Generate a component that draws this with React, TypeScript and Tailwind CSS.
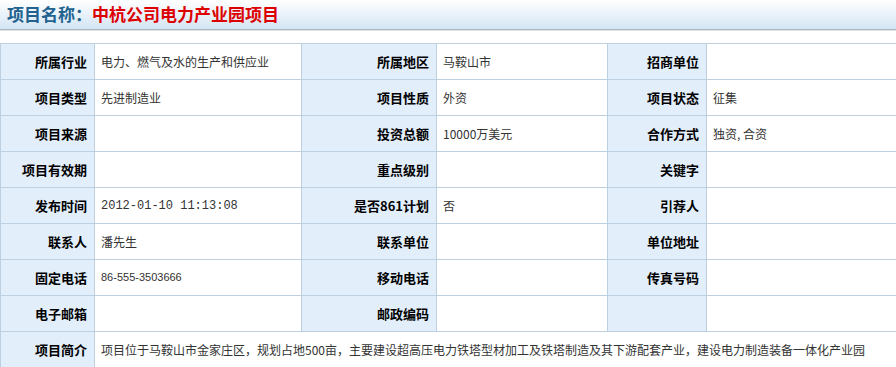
const rows: [string, string, string, string, string, string][] = [
  ["所属行业", "电力、燃气及水的生产和供应业", "所属地区", "马鞍山市", "招商单位", ""],
  ["项目类型", "先进制造业", "项目性质", "外资", "项目状态", "征集"],
  ["项目来源", "", "投资总额", "10000万美元", "合作方式", "独资, 合资"],
  ["项目有效期", "", "重点级别", "", "关键字", ""],
  ["发布时间", "2012-01-10 11:13:08", "是否861计划", "否", "引荐人", ""],
  ["联系人", "潘先生", "联系单位", "", "单位地址", ""],
  ["固定电话", "86-555-3503666", "移动电话", "", "传真号码", ""],
  ["电子邮箱", "", "邮政编码", "", "", ""],
];

const cjk = "font-['SimSun','Noto_Sans_CJK_SC',sans-serif]";

function Label({ text }: { text: string }) {
  return (
    <td className="h-9 border border-[#bdd0e2] bg-[#e2eefa] p-0 pr-[7px] text-right align-middle text-[13px] font-bold text-black">
      {text}
    </td>
  );
}

function Value({ text }: { text: string }) {
  const mono = /^\d{4}-\d{2}-\d{2}/.test(text);
  const phone = /^\d+-\d+-\d+$/.test(text);
  return (
    <td
      className={
        "h-9 border border-[#bdd0e2] bg-white p-0 pl-[6px] text-left align-middle text-[#333] " +
        (mono
          ? "font-['Liberation_Mono',monospace] text-[12px]"
          : phone
            ? "font-['Liberation_Sans',sans-serif] text-[11px]"
            : "text-[12px]")
      }
    >
      {text}
    </td>
  );
}

export default function App() {
  return (
    <div className={`h-[367px] w-[896px] overflow-hidden bg-white ${cjk}`}>
      <div className="h-[29px] bg-gradient-to-b from-white to-[#d3e5f4] pl-[7px] pt-[3px] text-[17px] font-bold leading-[21px]">
        <span className="text-[#22628f]">项目名称：</span>
        <span className="text-[#dd0000]">中杭公司电力产业园项目</span>
      </div>
      <div className="h-px bg-[#aeb9c4]" />
      <div className="h-px bg-[#dfe4ea]" />
      <div className="h-[12px]" />
      <table className="w-[900px] table-fixed border-collapse">
        <colgroup>
          <col className="w-[94px]" />
          <col className="w-[207px]" />
          <col className="w-[135px]" />
          <col className="w-[171px]" />
          <col className="w-[99px]" />
          <col />
        </colgroup>
        <tbody>
          {rows.map((r, i) => (
            <tr key={i}>
              <Label text={r[0]} />
              <Value text={r[1]} />
              <Label text={r[2]} />
              <Value text={r[3]} />
              <Label text={r[4]} />
              <Value text={r[5]} />
            </tr>
          ))}
          <tr>
            <Label text="项目简介" />
            <td colSpan={5} className="h-9 border border-[#bdd0e2] bg-white p-0 pl-[6px] text-left align-middle text-[12px] whitespace-nowrap text-[#333]">
              项目位于马鞍山市金家庄区，规划占地500亩，主要建设超高压电力铁塔型材加工及铁塔制造及其下游配套产业，建设电力制造装备一体化产业园
            </td>
          </tr>
        </tbody>
      </table>
    </div>
  );
}
